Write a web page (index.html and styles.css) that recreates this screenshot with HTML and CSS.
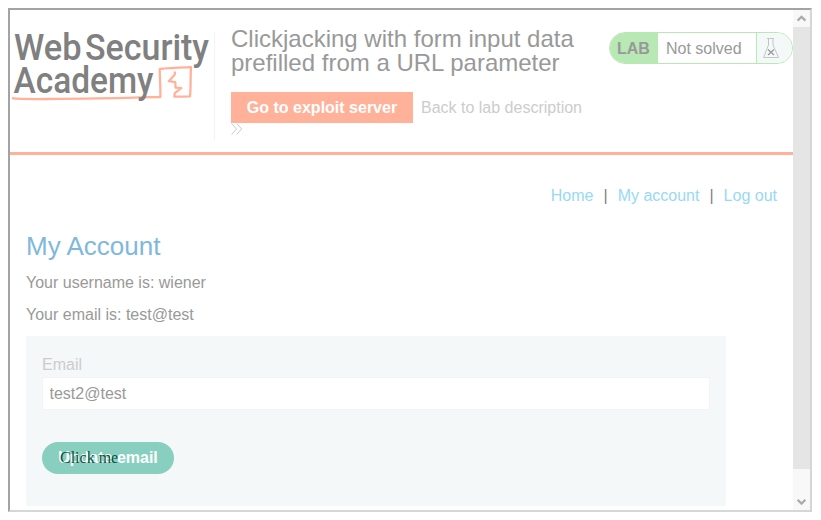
FILE: index.html
```html
<!DOCTYPE html>
<html lang="en">
<head>
<meta charset="utf-8">
<title>Clickjacking with form input data prefilled from a URL parameter</title>
<link rel="stylesheet" href="styles.css">
</head>
<body>
<div class="frame">
  <div class="page">
    <header class="banner">
      <svg class="logo" width="204" height="108" viewBox="10 32 204 108">
        <g class="wordmark">
          <text x="14" y="60.3" textLength="67.5" lengthAdjust="spacingAndGlyphs">Web</text>
          <text x="85" y="60.3" textLength="124" lengthAdjust="spacingAndGlyphs">Security</text>
        </g>
        <path class="sketch-line" d="M12 98.2C22 99.6 40 99 60 98.9C90 98.6 120 98.2 140 97.4L160.3 97C160.8 88 159.6 79 159.8 69C170 67.6 181 67.5 191 67.2C190.3 78 191 87 190 96.3C184 96.6 179 96.6 174.3 96.5L174.8 93.2L181.3 88.2L175.6 87.6L175.2 82.2L168.8 81.2L174.8 74.5L174.8 71.5"/>
        <g class="wordmark">
          <text x="13.5" y="92.8" textLength="140" lengthAdjust="spacingAndGlyphs">Academy</text>
        </g>
      </svg>
      <div class="intro">
        <h2>Clickjacking with form input data<br>prefilled from a URL parameter</h2>
        <div class="links">
          <a class="exploit">Go to exploit server</a>
          <a class="back">Back to lab description</a>
        </div>
        <svg class="chevrons" width="12" height="12" viewBox="0 0 12 12"><path d="M.5.5L5.5 6L.5 11.5M5.7.5L10.7 6L5.7 11.5"/></svg>
      </div>
      <div class="status">
        <span class="tag">LAB</span>
        <span class="state">Not solved</span>
        <span class="flask"><svg width="18" height="22" viewBox="0 0 18 22"><path d="M5 1.5H12M6.5 1.5V8L1.5 20.5H16.5L11 8V1.5"/><path class="cross" d="M6 12.5L12 18M12 12.5L6 18"/></svg></span>
      </div>
    </header>
    <nav><a>Home</a><span>|</span><a>My account</a><span>|</span><a>Log out</a></nav>
    <main>
      <h1>My Account</h1>
      <p>Your username is: wiener</p>
      <p>Your email is: test@test</p>
      <form>
        <label for="email">Email</label>
        <input id="email" type="text" value="test2@test">
        <div class="submit">
          <button type="button">Update email</button>
          <span class="decoy">Click me</span>
        </div>
      </form>
    </main>
  </div>
  <div class="scrollbar">
    <svg width="17" height="17" viewBox="0 0 17 17"><path d="M4.6 10.6L8.5 6.8L12.4 10.6"/></svg>
    <div class="thumb"></div>
    <svg width="17" height="17" viewBox="0 0 17 17"><path d="M4.6 6.8L8.5 10.6L12.4 6.8"/></svg>
  </div>
</div>
</body>
</html>
```
FILE: styles.css
```css
* { box-sizing: border-box; }
html { overflow: hidden; background: #fff; }
body { margin: 8px; font: 16px/20px "Liberation Sans", Arial, sans-serif; color: #999; }
.frame {
  display: flex;
  width: 804px;
  height: 504px;
  border: 2px solid;
  border-color: #a3a3a3 #d6d6d6 #d6d6d6 #a3a3a3;
}
.page { width: 783px; overflow: hidden; }
.banner {
  display: flex;
  align-items: flex-start;
  height: 145px;
  padding-top: 22px;
  border-bottom: 3px solid #ffb299;
}
.logo { flex: none; display: block; overflow: visible; }
.wordmark { font: 500 37px Roboto, sans-serif; fill: #808080; }
.sketch-line { fill: none; stroke: #ffb299; stroke-width: 2.3; stroke-linejoin: round; }
.intro {
  width: 395px;
  height: 108px;
  padding-left: 16px;
  border-left: 1px solid #f3f3f3;
}
h2 {
  margin: -5px 0 17px;
  font-size: 24px;
  line-height: 24px;
  font-weight: 400;
  white-space: nowrap;
}
.links { display: flex; gap: 8px; white-space: nowrap; line-height: 31px; }
.exploit { width: 182px; text-align: center; background: #ffb299; color: #fff; font-weight: 700; }
.back { color: #ccc; }
.chevrons { display: block; fill: none; stroke: #ccc; }
.status {
  display: flex;
  width: 184px;
  height: 32px;
  border: 1px solid #b8e8b4;
  border-radius: 16px;
  overflow: hidden;
  line-height: 32px;
}
.tag { width: 48px; padding-left: 7px; background: #b8e8b4; font-weight: 700; }
.state { width: 99px; padding-left: 8px; line-height: 31px; border-right: 1px solid #b8e8b4; }
.flask { flex: 1; padding: 4px 0 0 5px; background: #f4f8f9; }
.flask svg { display: block; fill: none; stroke: #c4c6c7; }
.flask .cross { stroke: #999; stroke-width: 1.3; }
nav { display: flex; justify-content: flex-end; padding: 31px 16px 0 0; color: #808080; }
nav a { color: #98d9f5; }
nav span { margin: 0 10px; }
main { padding: 0 16px; }
h1 { margin: 23px 0 10px; font-size: 26px; line-height: 34px; font-weight: 400; color: #80b8dd; }
p { margin: 0 0 12px; }
p + form { margin-top: -1px; }
form { width: 700px; height: 170px; padding: 19px 16px 0; background: #f4f8f9; }
label { display: block; color: #ccc; }
input {
  display: block;
  width: 668px;
  height: 33px;
  margin: 2px 0 32px;
  padding: 0 6.5px;
  border: 1px solid #f3f3f3;
  background: #fff;
  color: #999;
  font: inherit;
}
.submit { position: relative; width: 132px; height: 32px; }
button {
  display: block;
  width: 132px;
  height: 32px;
  padding: 0;
  border: 0;
  border-radius: 16px;
  background: #89cfc0;
  color: #fff;
  font: 700 16px/32px "Liberation Sans", Arial, sans-serif;
}
.decoy {
  position: absolute;
  left: 18px;
  top: 6px;
  font: 16px/20px "Liberation Serif", "Times New Roman", serif;
  color: #0a4f40;
}
.scrollbar { width: 17px; height: 500px; display: flex; flex-direction: column; background: #f8f8f8; }
.scrollbar svg { display: block; fill: none; stroke: #aaa; stroke-width: 2.3; }
.thumb { height: 442px; margin-bottom: 24px; background: #e5e5e5; }
```
